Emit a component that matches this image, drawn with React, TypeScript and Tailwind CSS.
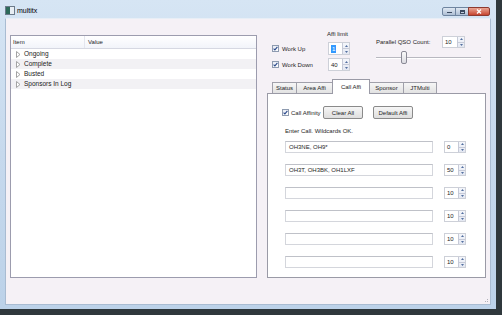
import React from "react";

function Check() {
  return (
    <div className="w-[7px] h-[7px] shrink-0 border border-[#8e9bb0] bg-gradient-to-br from-[#e8ecf4] to-white flex items-center justify-center">
      <svg width="5" height="5" viewBox="0 0 5 5">
        <path d="M0.6 2.6 L1.9 3.9 L4.4 0.8" fill="none" stroke="#2c4a8c" strokeWidth="1.1" />
      </svg>
    </div>
  );
}

function Arrows() {
  return (
    <div className="w-[7px] flex flex-col border-l border-[#c6cad8] bg-gradient-to-b from-[#f4f6fb] to-[#e4e8f2]">
      <div className="flex-1 flex items-center justify-center border-b border-[#c6cad8]">
        <svg width="3" height="2" viewBox="0 0 3 2">
          <path d="M0 2 L1.5 0 L3 2 Z" fill="#5470a0" />
        </svg>
      </div>
      <div className="flex-1 flex items-center justify-center">
        <svg width="3" height="2" viewBox="0 0 3 2">
          <path d="M0 0 L1.5 2 L3 0 Z" fill="#5470a0" />
        </svg>
      </div>
    </div>
  );
}

function Spin({ value, selected, wide, tall }: { value: string; selected?: boolean; wide?: boolean; tall?: boolean }) {
  const size = wide ? "w-[23px] h-[12px]" : tall ? "w-[22px] h-[13px]" : "w-[22px] h-[12px]";
  return (
    <div className={"flex shrink-0 border border-[#cdd0d8] bg-white " + size}>
      <div className="flex-1 flex items-center pl-[2px] text-[6px] leading-none text-[#1e1e1e]">
        {selected ? <span className="bg-[#3399ff] text-white px-[1px] py-[1px]">{value}</span> : value}
      </div>
      <Arrows />
    </div>
  );
}

function Btn({ label }: { label: string }) {
  return (
    <div className="w-[40px] h-[13px] shrink-0 rounded-[2px] border border-[#8a8a8a] bg-gradient-to-b from-[#f6f6f6] to-[#dedede] flex items-center justify-center text-[6px] leading-none text-[#1e1e1e]">
      {label}
    </div>
  );
}

function Expander() {
  return (
    <svg width="5" height="7" viewBox="0 0 5 7" className="shrink-0">
      <path d="M0.5 0.5 L4 3.5 L0.5 6.5 Z" fill="#fff" stroke="#9a9a9a" strokeWidth="0.9" />
    </svg>
  );
}

function Tab({ label, w, selected }: { label: string; w: string; selected?: boolean }) {
  if (selected) {
    return (
      <div className={"relative z-10 -mb-px -ml-px h-[15px] bg-white border border-b-0 border-[#9a9aa6] flex items-center justify-center text-[6px] leading-none text-[#1e1e1e] " + w}>
        {label}
      </div>
    );
  }
  return (
    <div className={"-ml-px first:ml-0 h-[11px] bg-gradient-to-b from-[#f6f6f6] to-[#e2e2e2] border border-b-0 border-[#a0a0aa] flex items-center justify-center text-[6px] leading-none text-[#1e1e1e] " + w}>
      {label}
    </div>
  );
}

function CallRow({ text, value }: { text: string; value: string }) {
  return (
    <div className="flex items-center h-[12px] ml-[3px]">
      <div className="w-[148px] h-[12px] border border-[#d4d6dc] border-t-[#bfc1c8] bg-white flex items-center pl-[3px] text-[6px] leading-none text-[#1e1e1e]">
        {text}
      </div>
      <div className="ml-[11px]">
        <Spin value={value} />
      </div>
    </div>
  );
}

export default function App() {
  const rows = ["Ongoing", "Complete", "Busted", "Sponsors In Log"];
  return (
    <div className="w-[502px] h-[315px] bg-[#2f383c] overflow-hidden font-['Liberation_Sans',Arial,sans-serif] text-[#1e1e1e]">
      <div className="w-[496px] h-[309px] flex flex-col bg-gradient-to-b from-[#d6e5f4] via-[#c6d9ed] to-[#bcd2e9]">
        {/* Title bar */}
        <div className="h-[18px] shrink-0 flex items-start">
          <div className="ml-[5px] mt-[6px] w-[10px] h-[9px] border border-[#6c7a8a] bg-white flex">
            <div className="w-[4px] bg-[#2d6a5a]" />
            <div className="flex-1 bg-[#e8eef4]" />
          </div>
          <span className="ml-[2px] mt-[7px] text-[7px] leading-[8px] text-black">multitx</span>
          <div className="ml-auto mr-[6px] mt-[7px] flex h-[9px]">
            <div className="w-[14px] h-[9px] rounded-l-[2px] border border-[#6f85a0] bg-gradient-to-b from-[#dfe8f3] to-[#aebfd4] flex items-end justify-center pb-[2px]">
              <div className="w-[5px] h-[1px] bg-[#3a4a60]" />
            </div>
            <div className="w-[14px] h-[9px] -ml-px border border-[#6f85a0] bg-gradient-to-b from-[#dfe8f3] to-[#aebfd4] flex items-center justify-center">
              <div className="w-[5px] h-[4px] border border-[#3a4a60] border-t-2" />
            </div>
            <div className="w-[22px] h-[9px] -ml-px rounded-r-[2px] border border-[#8c3a30] bg-gradient-to-b from-[#e9a594] to-[#c5422e] flex items-center justify-center">
              <svg width="6" height="5" viewBox="0 0 6 5">
                <path d="M1 0.5 L5 4.5 M5 0.5 L1 4.5" stroke="#fff" strokeWidth="1.3" />
              </svg>
            </div>
          </div>
        </div>

        {/* Client */}
        <div className="relative mx-[5px] mb-[4px] flex-1 bg-[#f5f1f6] border border-[#a9bcd2] border-t-[#e8eef6] flex items-start pl-[4px]">
          {/* Tree */}
          <div className="mt-[16px] w-[247px] h-[243px] shrink-0 border border-[#9c9cae] bg-white flex flex-col">
            <div className="h-[13px] shrink-0 flex border-b border-[#d6d8e2] bg-gradient-to-b from-white to-[#f2f4fa] text-[6px] leading-none">
              <div className="w-[74px] flex items-center pl-[2px] border-r border-[#e4e6ee]">Item</div>
              <div className="flex items-center pl-[3px]">Value</div>
            </div>
            {rows.map((r, i) => (
              <div
                key={r}
                className={"h-[10px] shrink-0 flex items-center pl-[5px] text-[6.5px] leading-none text-[#222] " + (i % 2 === 1 ? "bg-[#f2f1f4]" : "bg-white")}
              >
                <Expander />
                <span className="ml-[3px]">{r}</span>
              </div>
            ))}
          </div>

          {/* Right column */}
          <div className="ml-[10px] w-[219px] flex flex-col">
            <div className="h-[61px] shrink-0 flex">
              {/* Left group */}
              <div className="ml-[5px] w-[78px] flex flex-col">
                <div className="mt-[11px] ml-[55px] h-[8px] text-[6px] leading-[8px] whitespace-nowrap">Affi limit</div>
                <div className="mt-[4px] h-[13px] flex items-center">
                  <div className="w-[56px] flex items-center">
                    <Check />
                    <span className="ml-[3px] text-[6px] leading-none">Work Up</span>
                  </div>
                  <Spin value="1" selected tall />
                </div>
                <div className="mt-[3px] h-[13px] flex items-center">
                  <div className="w-[56px] flex items-center">
                    <Check />
                    <span className="ml-[3px] text-[6px] leading-none">Work Down</span>
                  </div>
                  <Spin value="40" tall />
                </div>
              </div>
              {/* Right group */}
              <div className="ml-[26px] flex flex-col">
                <div className="mt-[17px] h-[12px] flex items-center">
                  <div className="w-[66px] text-[6px] leading-none whitespace-nowrap">Parallel QSO Count:</div>
                  <Spin value="10" wide />
                </div>
                <div className="mt-[3px] relative w-[105px] h-[13px] flex items-center">
                  <div className="w-full h-[2px] border-t border-[#b8b8c0] border-b border-b-white" />
                  <div className="absolute left-[25px] top-0 w-[6px] h-[13px] rounded-[2px] border border-[#8a8a96] bg-gradient-to-b from-[#fafafa] to-[#dcdce2]" />
                </div>
              </div>
            </div>

            {/* Tabs */}
            <div className="h-[13px] shrink-0 flex items-end pl-[5px]">
              <Tab label="Status" w="w-[25px]" />
              <Tab label="Area Affi" w="w-[37px]" />
              <Tab label="Call Affi" w="w-[38px]" selected />
              <Tab label="Sponsor" w="w-[35px]" />
              <Tab label="JTMulti" w="w-[34px]" />
            </div>

            {/* Panel */}
            <div className="h-[185px] shrink-0 border border-[#9a9aa6] bg-white flex flex-col pl-[14px]">
              <div className="mt-[12px] h-[13px] flex items-center">
                <div className="w-[41px] flex items-center">
                  <Check />
                  <span className="ml-[2px] text-[6px] leading-none whitespace-nowrap">Call Affinity</span>
                </div>
                <Btn label="Clear All" />
                <div className="ml-[10px]">
                  <Btn label="Default Affi" />
                </div>
              </div>
              <div className="mt-[8px] ml-[3px] h-[8px] text-[6px] leading-[8px]">Enter Call. Wildcards OK.</div>
              <div className="mt-[6px] flex flex-col gap-[11px]">
                <CallRow text="OH3NE, OH9*" value="0" />
                <CallRow text="OH3T, OH3BK, OH1LXF" value="50" />
                <CallRow text="" value="10" />
                <CallRow text="" value="10" />
                <CallRow text="" value="10" />
                <CallRow text="" value="10" />
              </div>
            </div>
          </div>

          {/* resize grip */}
          <svg className="absolute right-[1px] bottom-[1px]" width="5" height="5" viewBox="0 0 5 5">
            <rect x="3" y="1" width="1" height="1" fill="#b0b0b8" />
            <rect x="1" y="3" width="1" height="1" fill="#b0b0b8" />
            <rect x="3" y="3" width="1" height="1" fill="#b0b0b8" />
          </svg>
        </div>
      </div>
    </div>
  );
}
